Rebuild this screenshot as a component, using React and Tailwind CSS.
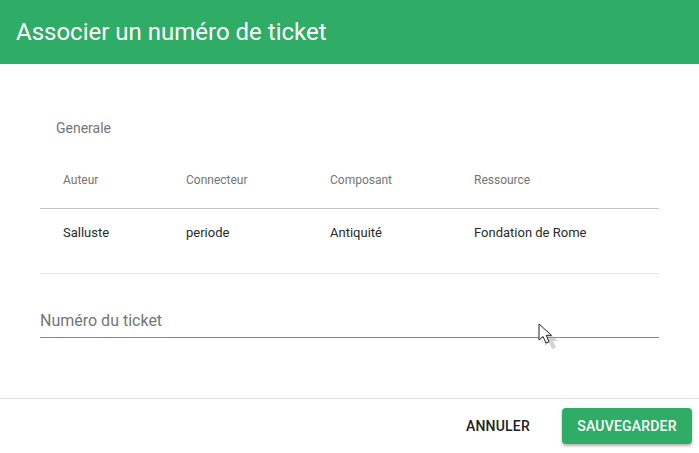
import React from 'react'

const columns = [
  { key: 'auteur', label: 'Auteur', width: 'w-[123px]' },
  { key: 'connecteur', label: 'Connecteur', width: 'w-[144px]' },
  { key: 'composant', label: 'Composant', width: 'w-[144px]' },
  { key: 'ressource', label: 'Ressource', width: 'flex-1' },
]

const row = {
  auteur: 'Salluste',
  connecteur: 'periode',
  composant: 'Antiquité',
  ressource: 'Fondation de Rome',
}

const Cursor = () => (
  <svg
    className="absolute left-[537px] top-[323px]"
    width="24"
    height="30"
    viewBox="0 0 24 30"
  >
    <path d="M5 4 L5 20 L9 16.5 L12 23 L16 21.5 L13 15 L18 15 Z" fill="#9e9e9e" opacity="0.45" transform="translate(3 3)" />
    <path d="M2 1 L2 17 L6 13.5 L9 20 L12 18.7 L9.2 12.3 L14.5 12.3 Z" fill="#fff" stroke="#222" strokeWidth="1" strokeLinejoin="round" />
  </svg>
)

export default function App() {
  return (
    <div
      className="relative w-[699px] h-[453px] bg-white flex flex-col overflow-hidden"
      style={{ fontFamily: 'Roboto, "Liberation Sans", sans-serif' }}
    >
      {/* Header */}
      <div className="h-[64px] shrink-0 bg-[#2fac66] flex items-center px-[16px]">
        <h1 className="text-[24px] text-white font-normal leading-none">
          Associer un numéro de ticket
        </h1>
      </div>

      {/* Content */}
      <div className="flex-1 px-[40px]">
        <div className="pt-[56px] pl-[16px] text-[14px] leading-[16px] text-[#757575]">
          Generale
        </div>

        <div className="mt-[17px]">
          <div className="flex h-[56px] items-center border-b border-[#c4c4c4]">
            {columns.map(col => (
              <div
                key={col.key}
                className={`${col.width} pl-[23px] text-[12px] text-[#757575] pb-[1px]`}
              >
                {col.label}
              </div>
            ))}
          </div>
          <div className="flex h-[65px] border-b border-[#e3e3e3] pt-[16px]">
            {columns.map(col => (
              <div
                key={col.key}
                className={`${col.width} pl-[23px] text-[13px] leading-[16px] text-[#2a2a2a]`}
              >
                {row[col.key]}
              </div>
            ))}
          </div>
        </div>

        <div className="mt-[37px] border-b border-[#8a8a8a] pb-[7px]">
          <div className="text-[16px] leading-[19px] text-[#757575]">
            Numéro du ticket
          </div>
        </div>
      </div>

      {/* Footer */}
      <div className="h-[55px] shrink-0 border-t border-[#e0e0e0] flex items-center justify-end gap-[16px] pr-[7px]">
        <button className="h-[36px] px-[16px] text-[14px] font-medium text-[#212121] uppercase tracking-[0.2px]">
          Annuler
        </button>
        <button className="h-[36px] w-[130px] rounded-[4px] bg-[#2fac66] text-white text-[14px] font-medium uppercase tracking-[0.2px] shadow-[0_2px_3px_rgba(0,0,0,0.3)]">
          Sauvegarder
        </button>
      </div>

      <Cursor />
    </div>
  )
}
